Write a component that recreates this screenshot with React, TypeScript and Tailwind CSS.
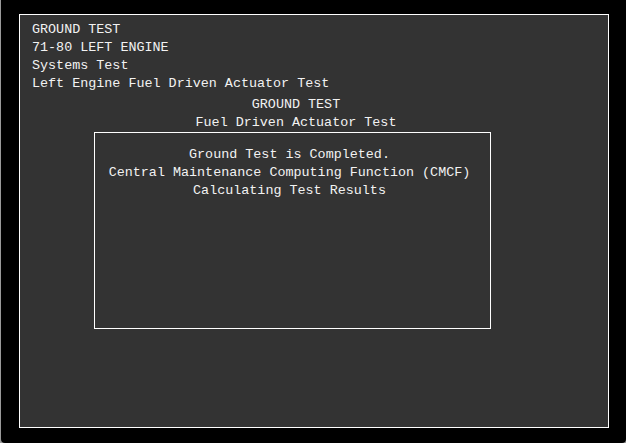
export default function App() {
  return (
    <div className="h-[443px] w-[626px] bg-[#9a9a9a] pl-px">
      <div className="h-full w-full rounded-b-[4px] bg-black pl-[18px] pt-[14px]">
        <div
          className="h-[414px] w-[590px] border border-white bg-[#333333] pt-[6px] text-[13.4px] leading-[18px] text-[#f2f2f2]"
          style={{ fontFamily: '"Liberation Mono", "DejaVu Sans Mono", monospace' }}
        >
          <div className="whitespace-pre pl-[12px]">
            <div>GROUND TEST</div>
            <div>71-80 LEFT ENGINE</div>
            <div>Systems Test</div>
            <div>Left Engine Fuel Driven Actuator Test</div>
          </div>
          <div className="mt-[3px] w-[552px] text-center">
            <div>GROUND TEST</div>
            <div>Fuel Driven Actuator Test</div>
          </div>
          <div className="ml-[74px] h-[197px] w-[397px] border border-white pt-[13px] text-center">
            <div className="pr-[6px]">Ground Test is Completed.</div>
            <div className="pr-[6px]">Central Maintenance Computing Function (CMCF)</div>
            <div className="pr-[6px]">Calculating Test Results</div>
          </div>
        </div>
      </div>
    </div>
  );
}
